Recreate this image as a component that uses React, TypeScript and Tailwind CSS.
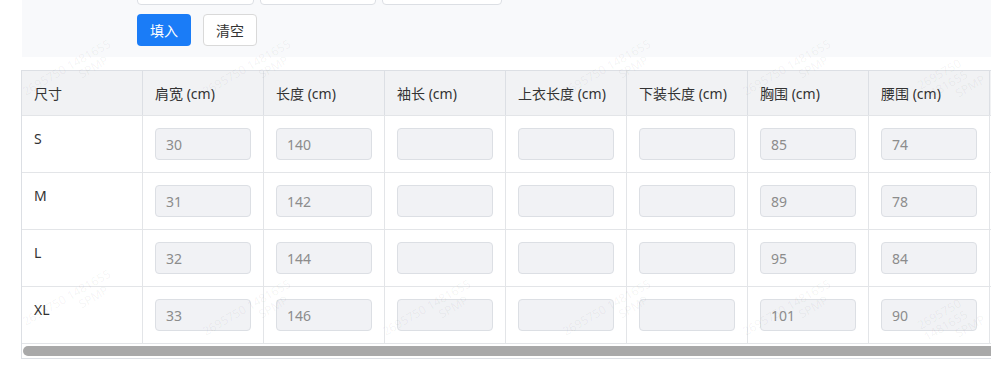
import { useState } from "react";

type SizeRow = {
  size: string;
  values: (number | null)[];
};

const columns = [
  "尺寸",
  "肩宽 (cm)",
  "长度 (cm)",
  "袖长 (cm)",
  "上衣长度 (cm)",
  "下装长度 (cm)",
  "胸围 (cm)",
  "腰围 (cm)",
  "臀围 (cm)",
];

const rows: SizeRow[] = [
  { size: "S", values: [30, 140, null, null, null, 85, 74, null] },
  { size: "M", values: [31, 142, null, null, null, 89, 78, null] },
  { size: "L", values: [32, 144, null, null, null, 95, 84, null] },
  { size: "XL", values: [33, 146, null, null, null, 101, 90, null] },
];

// faint tiled watermark on top of the page
const marks = [
  [20, 60],
  [200, 60],
  [560, 60],
  [740, 60],
  [920, 60],
  [20, 290],
  [200, 300],
  [380, 300],
  [560, 300],
  [740, 300],
  [920, 300],
];

function Watermark() {
  return (
    <div className="pointer-events-none absolute inset-0 overflow-hidden">
      {marks.map(([x, y], i) => (
        <div
          key={i}
          className="absolute flex -rotate-[30deg] flex-col items-end text-[12px] leading-[13px] text-black/[0.05]"
          style={{ left: x, top: y }}
        >
          <span>2695750 1481655</span>
          <span className="pr-[10px]">SPMP</span>
        </div>
      ))}
    </div>
  );
}

function CellInput({ value }: { value: number | null }) {
  return (
    <input
      disabled
      value={value ?? ""}
      readOnly
      className="box-border h-[32px] w-[96px] rounded-[4px] border border-[#dcdfe4] bg-[#f1f2f5] px-[10px] text-[14px] text-[#8c8c8c] outline-none"
    />
  );
}

export default function App() {
  const [data] = useState(rows);

  return (
    <div className="relative flex h-[369px] w-[991px] flex-col overflow-hidden bg-white font-['Noto_Sans','Noto_Sans_CJK_SC',sans-serif] text-[14px] text-[#333]">
      {/* fill panel */}
      <div className="ml-[22px] flex h-[57px] flex-col bg-[#f8f9fb] pl-[115px]">
        <div className="-mt-[27px] flex gap-[6px]">
          <div className="h-[32px] w-[117px] rounded-[4px] border border-[#dcdfe4] bg-white" />
          <div className="h-[32px] w-[116px] rounded-[4px] border border-[#dcdfe4] bg-white" />
          <div className="h-[32px] w-[120px] rounded-[4px] border border-[#dcdfe4] bg-white" />
        </div>
        <div className="mt-[9px] flex gap-[12px]">
          <button className="h-[32px] w-[54px] rounded-[4px] bg-[#1a7cf7] text-[14px] text-white">
            填入
          </button>
          <button className="h-[32px] w-[54px] rounded-[4px] border border-[#d9d9d9] bg-white text-[14px] text-[#333]">
            清空
          </button>
        </div>
      </div>

      {/* size table */}
      <div className="ml-[21px] mt-[13px] w-[1100px] border-b border-l border-[#dcdfe4]">
        <div className="grid grid-cols-[repeat(9,121px)]">
          {columns.map((c) => (
            <div
              key={c}
              className="flex h-[45px] items-center border-t border-r border-[#dcdfe4] bg-[#f1f2f4] px-[12px] text-[#333]"
            >
              {c}
            </div>
          ))}
          {data.map((r) => (
            <div key={r.size} className="contents">
              <div className="h-[57px] border-t border-r border-[#e3e5e8] px-[12px] pt-[12px] leading-[22px]">
                {r.size}
              </div>
              {r.values.map((v, i) => (
                <div
                  key={i}
                  className="h-[57px] border-t border-r border-[#e3e5e8] px-[12px] pt-[12px]"
                >
                  <CellInput value={v} />
                </div>
              ))}
            </div>
          ))}
        </div>
        {/* horizontal scrollbar */}
        <div className="flex h-[15px] items-center border-t border-[#e3e5e8] pl-[1px]">
          <div className="h-[10px] w-full rounded-l-full bg-[#a9a9a9]" />
        </div>
      </div>

      <Watermark />
    </div>
  );
}
